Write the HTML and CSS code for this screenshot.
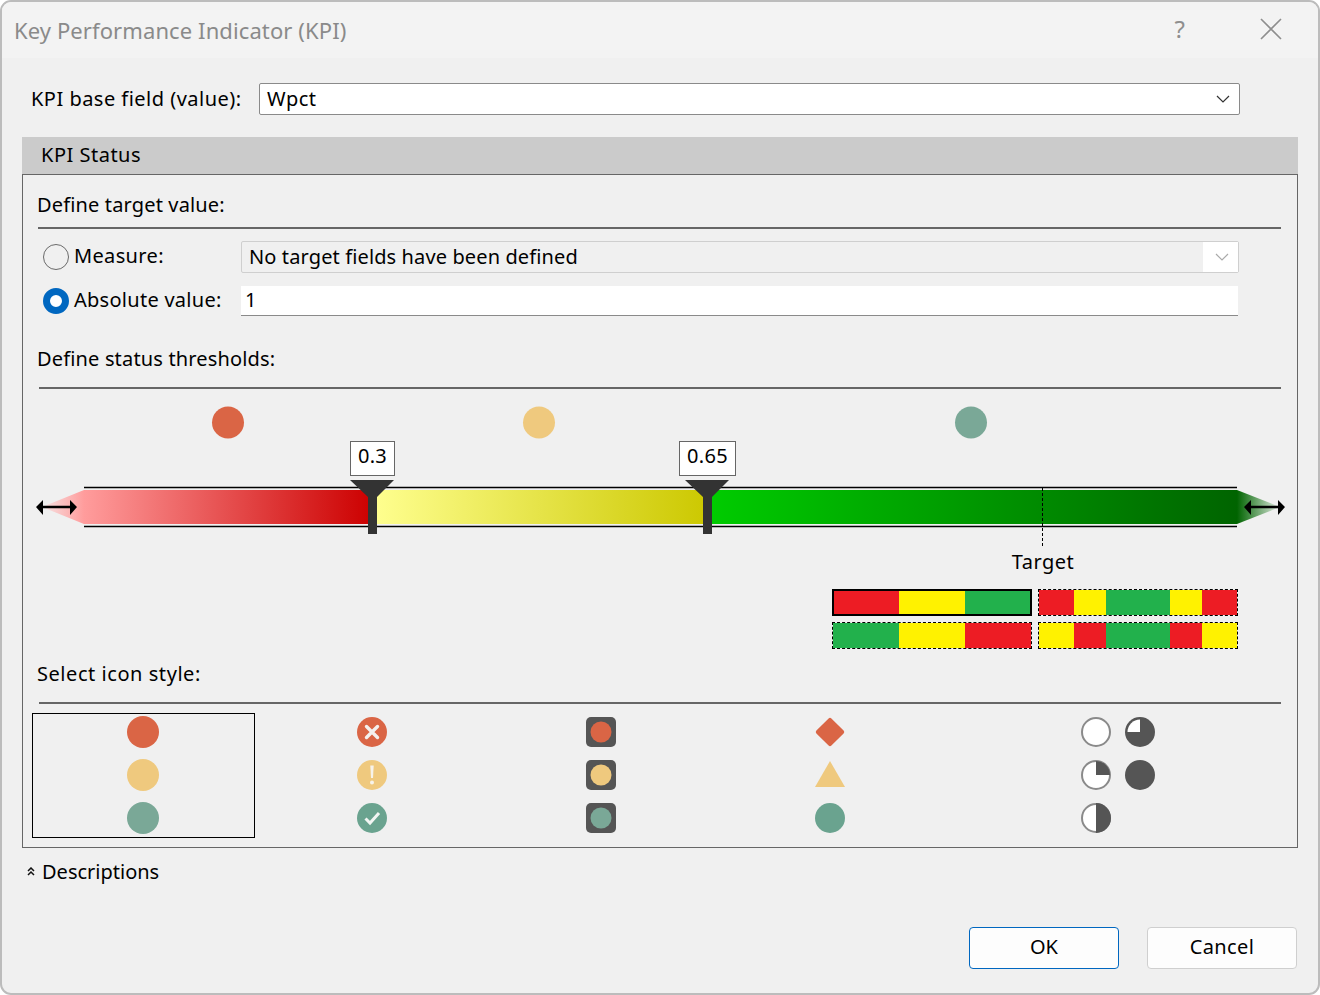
FILE: index.html
```html
<!DOCTYPE html>
<html lang="en">
<head>
<meta charset="utf-8">
<title>Key Performance Indicator (KPI)</title>
<link rel="stylesheet" href="styles.css">
</head>
<body>
<div class="window">
  <header class="titlebar">
    <span class="title">Key Performance Indicator (KPI)</span>
    <span class="help">?</span>
    <svg class="close" width="22" height="22" viewBox="0 0 22 22"><path d="M1 1L21 21M21 1L1 21" stroke="#8e8e8e" stroke-width="1.6" fill="none"/></svg>
  </header>

  <div class="base-row">
    <label class="base-label">KPI base field (value):</label>
    <div class="select">
      <span class="select-text">Wpct</span>
      <svg width="14" height="8" viewBox="0 0 14 8"><path d="M1 1L7 7L13 1" stroke="#333" stroke-width="1.2" fill="none"/></svg>
    </div>
  </div>

  <section class="panel">
    <div class="panel-head">KPI Status</div>
    <div class="panel-body">
      <div class="heading h1">Define target value:</div>

      <div class="radio-row first">
        <span class="radio"></span>
        <span class="radio-label measure">Measure:</span>
        <div class="combo-off">
          <span class="combo-text">No target fields have been defined</span>
          <span class="combo-btn"><svg width="14" height="8" viewBox="0 0 14 8"><path d="M1 1L7 7L13 1" stroke="#aaa" stroke-width="1.2" fill="none"/></svg></span>
        </div>
      </div>
      <div class="radio-row second">
        <span class="radio on"></span>
        <span class="radio-label absolute">Absolute value:</span>
        <div class="input">1</div>
      </div>

      <div class="heading h2">Define status thresholds:</div>

      <div class="slider">
        <svg class="slider-art" width="1274" height="200" viewBox="23 389 1274 200">
          <defs>
            <linearGradient id="gr"><stop offset="0" stop-color="#ff9c9c"/><stop offset="1" stop-color="#cc0000"/></linearGradient>
            <linearGradient id="gy"><stop offset="0" stop-color="#ffff90"/><stop offset="1" stop-color="#ccc800"/></linearGradient>
            <linearGradient id="gg"><stop offset="0" stop-color="#00cc00"/><stop offset="1" stop-color="#006400"/></linearGradient>
            <linearGradient id="tl"><stop offset="0" stop-color="#f6e4e4"/><stop offset="1" stop-color="#ff9c9c"/></linearGradient>
            <linearGradient id="tr"><stop offset="0" stop-color="#006400"/><stop offset="1" stop-color="#e4ece4"/></linearGradient>
          </defs>
          <circle cx="228" cy="422.5" r="16" fill="#da6545"/>
          <circle cx="539" cy="422.5" r="16" fill="#efc97e"/>
          <circle cx="971" cy="422.5" r="16" fill="#7aa897"/>

          <path d="M84 487.5H1237M84 526.5H1237" stroke="#000" stroke-width="1.4"/>
          <path d="M84 490V524L42 507Z" fill="url(#tl)"/>
          <rect x="84" y="490" width="288" height="34" fill="url(#gr)"/>
          <rect x="372" y="490" width="336" height="34" fill="url(#gy)"/>
          <rect x="708" y="490" width="529" height="34" fill="url(#gg)"/>
          <path d="M1237 490V524L1280 507Z" fill="url(#tr)"/>

          <path d="M1042.5 488V546" stroke="#000" stroke-dasharray="3 2" stroke-width="1"/>

          <path d="M350 480H394L377 497V534H368V497Z" fill="#333"/>
          <path d="M685 480H729L712 497V534H703V497Z" fill="#333"/>

          <path d="M40 507H73M1248 507H1281" stroke="#000" stroke-width="2.4"/>
          <path d="M36 507L43 500V515ZM77 507L70 500V515ZM1244 507L1251 500V515ZM1285 507L1278 500V515Z" fill="#000"/>
        </svg>
        <div class="handle h-a">0.3</div>
        <div class="handle h-b">0.65</div>
        <div class="target">Target</div>
      </div>

      <div class="thumbs">
        <div class="thumb sel"><i class="r"></i><i class="y"></i><i class="g"></i></div>
        <div class="thumb"><i class="r a"></i><i class="y b"></i><i class="g c"></i><i class="y b"></i><i class="r a"></i></div>
        <div class="thumb"><i class="g"></i><i class="y"></i><i class="r"></i></div>
        <div class="thumb"><i class="y a"></i><i class="r b"></i><i class="g c"></i><i class="r b"></i><i class="y a"></i></div>
      </div>

      <div class="heading h3">Select icon style:</div>

      <div class="icons">
        <div class="icon-set selected">
          <svg width="32" height="32" viewBox="0 0 32 32"><circle cx="16" cy="16" r="16" fill="#da6545"/></svg>
          <svg width="32" height="32" viewBox="0 0 32 32"><circle cx="16" cy="16" r="16" fill="#efc97e"/></svg>
          <svg width="32" height="32" viewBox="0 0 32 32"><circle cx="16" cy="16" r="16" fill="#7aa897"/></svg>
        </div>
        <div class="icon-set">
          <svg width="30" height="30" viewBox="0 0 30 30"><circle cx="15" cy="15" r="15" fill="#da6545"/><path d="M9.5 9.5L20.5 20.5M20.5 9.5L9.5 20.5" stroke="#f4f0ee" stroke-width="3.4" stroke-linecap="round"/></svg>
          <svg width="30" height="30" viewBox="0 0 30 30"><circle cx="15" cy="15" r="15" fill="#efc97e"/><path d="M13.3 5.5H16.7L16 18H14Z" fill="#f7f3ea"/><circle cx="15" cy="22.5" r="2" fill="#f7f3ea"/></svg>
          <svg width="30" height="30" viewBox="0 0 30 30"><circle cx="15" cy="15" r="15" fill="#6aa38f"/><path d="M8.5 15.5L13 20L22 10" stroke="#f2f5f3" stroke-width="3" fill="none"/></svg>
        </div>
        <div class="icon-set">
          <svg width="30" height="30" viewBox="0 0 30 30"><rect width="30" height="30" rx="5" fill="#555"/><circle cx="15" cy="15" r="10.5" fill="#da6545"/></svg>
          <svg width="30" height="30" viewBox="0 0 30 30"><rect width="30" height="30" rx="5" fill="#555"/><circle cx="15" cy="15" r="10.5" fill="#efc97e"/></svg>
          <svg width="30" height="30" viewBox="0 0 30 30"><rect width="30" height="30" rx="5" fill="#555"/><circle cx="15" cy="15" r="10.5" fill="#7aa897"/></svg>
        </div>
        <div class="icon-set">
          <svg width="30" height="30" viewBox="0 0 30 30"><path d="M13.6 1.4Q15 0 16.4 1.4L28.6 13.6Q30 15 28.6 16.4L16.4 28.6Q15 30 13.6 28.6L1.4 16.4Q0 15 1.4 13.6Z" fill="#da6545"/></svg>
          <svg width="30" height="30" viewBox="0 0 30 30"><path d="M15 1L30 27H0Z" fill="#efc97e"/></svg>
          <svg width="30" height="30" viewBox="0 0 30 30"><circle cx="15" cy="15" r="15" fill="#6aa38f"/></svg>
        </div>
        <div class="icon-set harvey">
          <svg width="30" height="30" viewBox="0 0 30 30"><circle cx="15" cy="15" r="14" fill="#fff" stroke="#8a8a8a" stroke-width="2"/></svg>
          <svg width="30" height="30" viewBox="0 0 30 30"><circle cx="15" cy="15" r="15" fill="#555"/><path d="M15 15V2.5A12.5 12.5 0 0 0 2.5 15Z" fill="#fff"/></svg>
          <svg width="30" height="30" viewBox="0 0 30 30"><circle cx="15" cy="15" r="14" fill="#fff" stroke="#8a8a8a" stroke-width="2"/><path d="M15 15V1A14 14 0 0 1 29 15Z" fill="#555"/></svg>
          <svg width="30" height="30" viewBox="0 0 30 30"><circle cx="15" cy="15" r="15" fill="#555"/></svg>
          <svg width="30" height="30" viewBox="0 0 30 30"><circle cx="15" cy="15" r="14" fill="#fff" stroke="#8a8a8a" stroke-width="2"/><path d="M15 0A15 15 0 0 1 15 30Z" fill="#555"/></svg>
        </div>
      </div>
    </div>
  </section>

  <div class="descriptions">
    <svg width="8" height="9" viewBox="0 0 8 9"><path d="M1 4L4 1L7 4M1 8L4 5L7 8" stroke="#111" stroke-width="1.5" fill="none"/></svg>
    <span>Descriptions</span>
  </div>

  <footer class="footer">
    <button class="btn primary">OK</button>
    <button class="btn cancel">Cancel</button>
  </footer>
</div>
</body>
</html>
```

FILE: styles.css
```css
* { box-sizing: border-box; }
html, body { margin: 0; padding: 0; background: #fff; }
body {
  width: 1320px;
  height: 995px;
  overflow: hidden;
  font-family: "Noto Sans", "Open Sans", sans-serif;
  font-size: 20px;
  color: #000;
}
.window {
  width: 1320px;
  height: 995px;
  background: #f0f0f0;
  border: 2px solid #bcbcbc;
  border-radius: 11px;
  overflow: hidden;
  display: flex;
  flex-direction: column;
}
.titlebar {
  height: 56px;
  flex: none;
  background: #f3f3f3;
  display: flex;
  align-items: center;
  padding-left: 12px;
  padding-right: 36px;
}
.title { font-size: 22px; color: #8a8a8a; flex: 1; letter-spacing: 0.1px; }
.help { font-size: 24px; color: #8e8e8e; margin-right: 75px; margin-top: -4px; }
.close { flex: none; margin-top: -3px; }

.base-row {
  display: flex;
  align-items: center;
  margin-top: 25px;
  padding-left: 29px;
  height: 32px;
  flex: none;
}
.base-label { width: 228px; flex: none; letter-spacing: 0.48px; margin-top: -2px; }
.select {
  width: 981px;
  height: 32px;
  background: #fff;
  border: 1px solid #8a8a8a;
  border-radius: 2px;
  display: flex;
  align-items: center;
  justify-content: space-between;
  padding: 0 9px 0 7px;
}
.select-text { letter-spacing: 0.5px; margin-top: -2px; }

.panel { margin: 22px 0 0 20px; width: 1276px; flex: none; }
.panel-head {
  height: 37px;
  background: #cbcbcb;
  padding-left: 19px;
  line-height: 36px;
  letter-spacing: 0.5px;
}
.panel-body {
  height: 674px;
  border: 1px solid #666;
  padding-top: 15px;
}
.heading {
  margin: 0 16px 0 15px;
  height: 39px;
  line-height: 30px;
  border-bottom: 2px solid #666;
  text-indent: -1px;
}
.heading.h1 { letter-spacing: 0.15px; }
.heading.h2 { margin: 28px 16px 0 16px; height: 45px; letter-spacing: 0.16px; text-indent: -2px; }
.heading.h3 { margin: 10px 16px 0 16px; height: 45px; letter-spacing: 0.55px; text-indent: -2px; }

.radio-row { display: flex; align-items: center; padding-left: 20px; }
.radio-row.first { margin-top: 12px; height: 32px; }
.radio-row.second { margin-top: 13px; height: 30px; }
.radio {
  width: 26px;
  height: 26px;
  border-radius: 50%;
  border: 1.5px solid #6a6a6a;
  flex: none;
}
.radio.on { border: 7.5px solid #0067c0; background: #fff; }
.radio-label { width: 172px; padding-left: 5px; flex: none; margin-top: -4px; }
.radio-label.measure { letter-spacing: 0.35px; }
.radio-label.absolute { letter-spacing: 0.27px; }
.combo-off {
  width: 998px;
  height: 32px;
  border: 1.5px solid #cfcfcf;
  border-radius: 2px;
  display: flex;
  background: #f0f0f0;
}
.combo-text { flex: 1; padding-left: 7px; line-height: 29px; letter-spacing: 0.12px; }
.combo-btn {
  width: 35px;
  background: #fff;
  display: flex;
  align-items: center;
  justify-content: center;
  padding-left: 2px;
}
.input {
  width: 997px;
  height: 30px;
  background: #fff;
  border-bottom: 1.5px solid #8a8a8a;
  padding-left: 4px;
  line-height: 28px;
}

.slider { position: relative; height: 200px; }
.slider-art { display: block; }
.handle {
  position: absolute;
  top: 52px;
  height: 35px;
  background: #fff;
  border: 1px solid #666;
  text-align: center;
  line-height: 28px;
  letter-spacing: 0.3px;
}
.h-a { left: 327px; width: 45px; }
.h-b { left: 656px; width: 57px; }
.target {
  position: absolute;
  left: 980px;
  width: 80px;
  top: 158px;
  text-align: center;
  line-height: 30px;
  letter-spacing: 0.5px;
}

.thumbs {
  display: grid;
  grid-template-columns: 200px 200px;
  gap: 6px;
  justify-content: end;
  padding-right: 59px;
}
.thumb {
  height: 27px;
  border: 1px dashed #000;
  display: flex;
}
.thumb.sel { border: 2px solid #000; }
.thumb i { flex: 1; display: block; }
.thumb .r { background: #ed1c24; }
.thumb .y { background: #fff200; }
.thumb .g { background: #22b14c; }
.thumb .a { flex: 35; }
.thumb .b { flex: 32; }
.thumb .c { flex: 65; }

.icons {
  display: grid;
  grid-template-columns: repeat(4, 223px) 340px;
  column-gap: 6px;
  margin: 9px 0 0 9px;
  height: 125px;
}
.icon-set {
  display: flex;
  flex-direction: column;
  align-items: center;
  justify-content: center;
  gap: 13px;
  padding-right: 2px;
  padding-bottom: 1px;
}
.icon-set.selected { border: 1px solid #000; gap: 11px; }
.icon-set svg { display: block; }
.icon-set.harvey {
  display: grid;
  grid-template-columns: 30px 30px;
  column-gap: 14px;
  row-gap: 13px;
  justify-content: center;
  align-content: center;
  padding-right: 0;
}

.descriptions {
  display: flex;
  align-items: center;
  gap: 7px;
  height: 30px;
  margin: 8px 0 0 25px;
  flex: none;
}
.footer {
  display: flex;
  justify-content: flex-end;
  gap: 28px;
  margin-top: 41px;
  padding-right: 21px;
  flex: none;
}
.btn {
  width: 150px;
  height: 42px;
  background: #fdfdfd;
  border: 1px solid #cfcfcf;
  border-radius: 4px;
  font: inherit;
  color: #000;
  padding: 0 0 4px;
}
.btn.cancel { letter-spacing: 0.4px; }
.btn.primary { border-color: #0067c0; }
```
